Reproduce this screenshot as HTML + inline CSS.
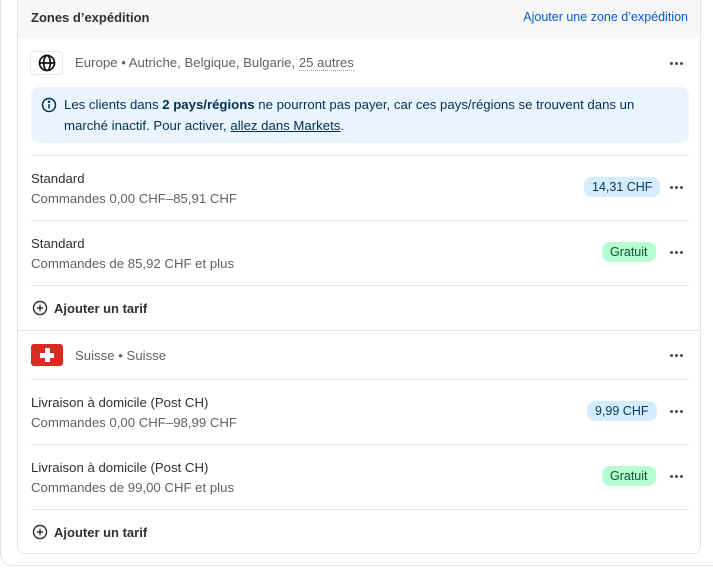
<!DOCTYPE html>
<html><head><meta charset="utf-8"><style>
*{box-sizing:border-box;margin:0;padding:0}
body{width:713px;height:569px;background:#fff;font-family:"Liberation Sans",sans-serif;font-size:13.2px;color:#303030;position:relative;overflow:hidden}
.outer{position:absolute;left:0;top:-10px;width:713px;height:576px;border-left:1px solid #e3e3e3;border-bottom:1px solid #e3e3e3;border-radius:0 0 0 12px}
.hdr{position:absolute;left:17px;top:0;width:684px;height:38px;background:#f7f7f7;border-left:1px solid #e3e3e3;border-right:1px solid #e3e3e3}
.hdr b{position:absolute;left:13px;top:10px;font-size:13px;color:#303030}
.hdr a{position:absolute;right:12px;top:10px;color:#005bd3;font-size:12.5px;text-decoration:none}
.card{position:absolute;left:17px;top:38px;width:684px;height:516px;border:1px solid #e3e3e3;border-top:none;border-radius:0 0 8px 8px}
.abs{position:absolute}
.dots{position:absolute;left:652px;width:16px;height:4px}
.dots i{position:absolute;top:0;width:3px;height:3px;border-radius:50%;background:#4a4a4a}
.div{position:absolute;left:13px;width:658px;height:1px;background:#e3e3e3}
.t{position:absolute;left:13px;color:#303030}
.s{position:absolute;left:13px;color:#616161}
.badge{position:absolute;height:20px;line-height:20px;padding:0 8px;border-radius:8px;font-size:12.5px}
.blue{background:#d5ebff;color:#003a5a}
.green{background:#b4fed2;color:#0c5132}
.add{position:absolute;left:13px;font-weight:bold;font-size:13px;color:#303030}
.zone{position:absolute;left:74px;color:#616161}
</style></head><body>
<div class="outer"></div>
<div class="hdr"><b>Zones d’expédition</b><a>Ajouter une zone d’expédition</a></div>
<div class="card">
 <div class="abs" style="left:12px;top:13px;width:33px;height:24px;border:1px solid #e8e8e8;border-radius:4px;background:#fff">
  <svg width="20" height="20" viewBox="0 0 20 20" style="position:absolute;left:6px;top:1px" fill="none" stroke="#111" stroke-width="1.7"><circle cx="10" cy="10" r="7.5"/><line x1="2.5" y1="10" x2="17.5" y2="10"/><ellipse cx="10" cy="10" rx="3.3" ry="7.5"/></svg>
 </div>
 <div class="zone" style="left:57px;top:17px">Europe • Autriche, Belgique, Bulgarie, <span style="border-bottom:1px dotted #999">25 autres</span></div>
 <div class="dots" style="top:24px"><i style="left:0"></i><i style="left:5px"></i><i style="left:10px"></i></div>
 <div class="abs" style="left:13px;top:49px;width:658px;height:56px;background:#eaf4ff;border-radius:8px;color:#00304d;line-height:21px;padding:7px 22px 0 33px">
  <svg width="16" height="16" viewBox="0 0 16 16" style="position:absolute;left:10px;top:10px" fill="none" stroke="#00304d" stroke-width="1.5"><circle cx="8" cy="8" r="6.5"/><line x1="8" y1="7" x2="8" y2="11.5"/><circle cx="8" cy="4.8" r=".5" fill="#00304d"/></svg>
  Les clients dans <b>2 pays/régions</b> ne pourront pas payer, car ces pays/régions se trouvent dans un marché inactif. Pour activer, <u>allez dans Markets</u>.
 </div>
 <div class="div" style="top:117px"></div>
 <div class="t" style="top:133px">Standard</div><div class="s" style="top:153px">Commandes 0,00 CHF–85,91 CHF</div>
 <div class="badge blue" style="left:566px;top:139px">14,31 CHF</div><div class="dots" style="top:148px"><i style="left:0"></i><i style="left:5px"></i><i style="left:10px"></i></div>
 <div class="div" style="top:182px"></div>
 <div class="t" style="top:198px">Standard</div><div class="s" style="top:218px">Commandes de 85,92 CHF et plus</div>
 <div class="badge green" style="left:584px;top:204px">Gratuit</div><div class="dots" style="top:213px"><i style="left:0"></i><i style="left:5px"></i><i style="left:10px"></i></div>
 <div class="div" style="top:247px"></div>
 <svg width="16" height="16" viewBox="0 0 16 16" style="position:absolute;left:14px;top:262px" fill="none" stroke="#303030" stroke-width="1.4"><circle cx="8" cy="8" r="6.5"/><path d="M8 4.8v6.4M4.8 8h6.4"/></svg>
 <div class="add" style="left:36px;top:263px">Ajouter un tarif</div>
 <div class="abs" style="left:0;top:292px;width:682px;height:1px;background:#e3e3e3"></div>
 <div class="abs" style="left:13px;top:306px;width:32px;height:22px;background:#d82c20;border-radius:3px">
  <div class="abs" style="left:13.5px;top:4px;width:5px;height:14px;background:#fff"></div>
  <div class="abs" style="left:9px;top:8.5px;width:14px;height:5px;background:#fff"></div>
 </div>
 <div class="zone" style="left:57px;top:310px">Suisse • Suisse</div>
 <div class="dots" style="top:316px"><i style="left:0"></i><i style="left:5px"></i><i style="left:10px"></i></div>
 <div class="div" style="top:341px"></div>
 <div class="t" style="top:357px">Livraison à domicile (Post CH)</div><div class="s" style="top:377px">Commandes 0,00 CHF–98,99 CHF</div>
 <div class="badge blue" style="left:569px;top:363px">9,99 CHF</div><div class="dots" style="top:372px"><i style="left:0"></i><i style="left:5px"></i><i style="left:10px"></i></div>
 <div class="div" style="top:406px"></div>
 <div class="t" style="top:422px">Livraison à domicile (Post CH)</div><div class="s" style="top:442px">Commandes de 99,00 CHF et plus</div>
 <div class="badge green" style="left:584px;top:428px">Gratuit</div><div class="dots" style="top:437px"><i style="left:0"></i><i style="left:5px"></i><i style="left:10px"></i></div>
 <div class="div" style="top:471px"></div>
 <svg width="16" height="16" viewBox="0 0 16 16" style="position:absolute;left:14px;top:486px" fill="none" stroke="#303030" stroke-width="1.4"><circle cx="8" cy="8" r="6.5"/><path d="M8 4.8v6.4M4.8 8h6.4"/></svg>
 <div class="add" style="left:36px;top:487px">Ajouter un tarif</div>
</div>
</body></html>
